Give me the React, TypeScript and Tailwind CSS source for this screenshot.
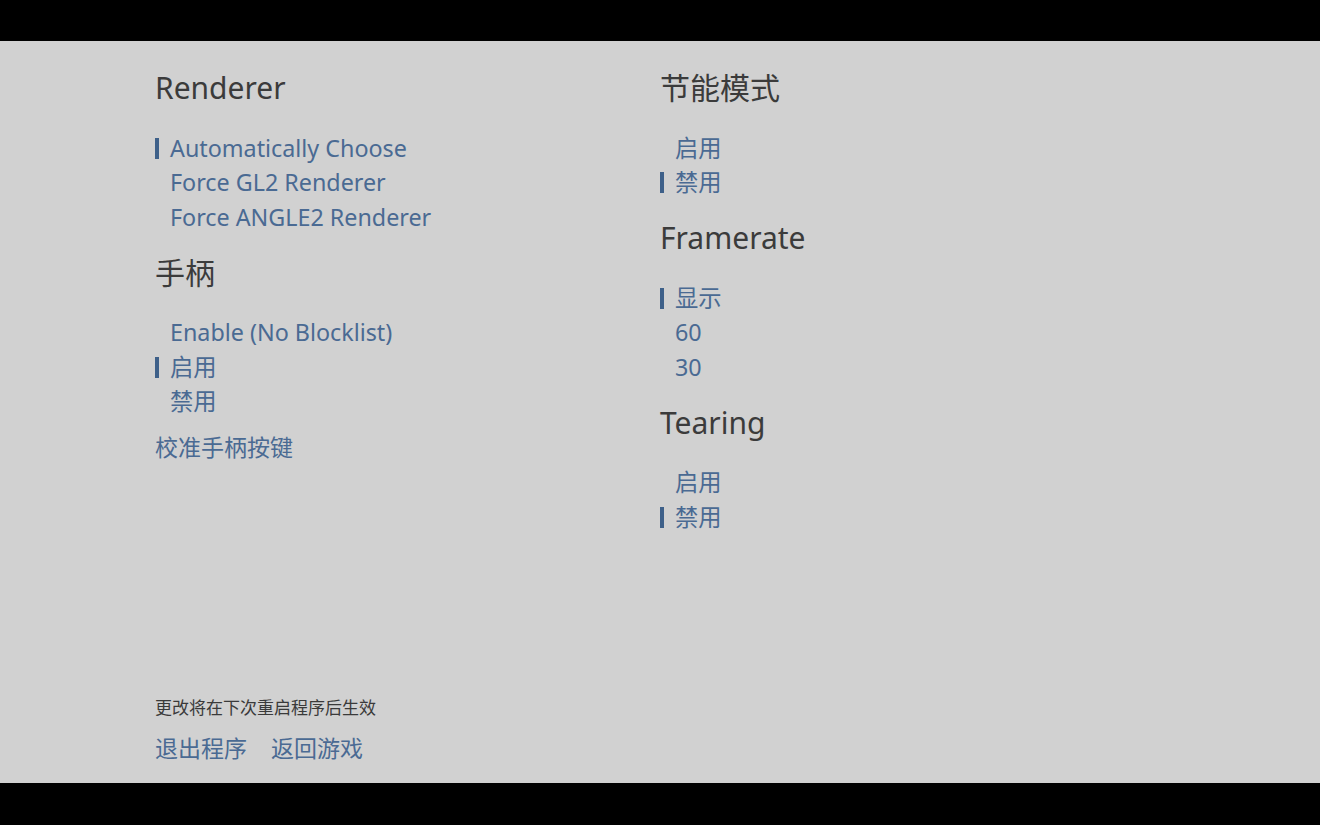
type Option = { label: string; selected?: boolean }

type Section = { title: string; options: Option[] }

const leftSections: Section[] = [
  {
    title: 'Renderer',
    options: [
      { label: 'Automatically Choose', selected: true },
      { label: 'Force GL2 Renderer' },
      { label: 'Force ANGLE2 Renderer' },
    ],
  },
  {
    title: '手柄',
    options: [
      { label: 'Enable (No Blocklist)' },
      { label: '启用', selected: true },
      { label: '禁用' },
    ],
  },
]

const rightSections: Section[] = [
  {
    title: '节能模式',
    options: [{ label: '启用' }, { label: '禁用', selected: true }],
  },
  {
    title: 'Framerate',
    options: [{ label: '显示', selected: true }, { label: '60' }, { label: '30' }],
  },
  {
    title: 'Tearing',
    options: [{ label: '启用' }, { label: '禁用', selected: true }],
  },
]

const font = {
  fontFamily: '"Noto Sans", "Noto Sans CJK SC", sans-serif',
}

function OptionRow({ label, selected }: Option) {
  return (
    <div className="flex h-[34.5px] items-center">
      <span
        className={
          selected ? 'h-[21px] w-[4px] bg-[#3e6089]' : 'h-[21px] w-[4px]'
        }
      />
      <span className="ml-[11px] text-[23.3px] leading-none text-[#4a6a93]">
        {label}
      </span>
    </div>
  )
}

function SettingSection({ title, options }: Section) {
  return (
    <div className="mb-[16px]">
      <h2 className="h-[44px] text-[30px] leading-[44px] text-[#3b3b3b]">
        {title}
      </h2>
      <div className="mt-[21px]">
        {options.map((option) => (
          <OptionRow key={option.label} {...option} />
        ))}
      </div>
    </div>
  )
}

export default function App() {
  return (
    <div className="flex h-[825px] w-[1320px] flex-col bg-black" style={font}>
      <div className="h-[41px] shrink-0 bg-black" />
      <main className="flex flex-1 flex-col bg-[#d1d1d1] px-[155px] pt-[25px] pb-[18px]">
        <div className="grid grid-cols-[505px_1fr]">
          <div>
            {leftSections.map((section) => (
              <SettingSection key={section.title} {...section} />
            ))}
            <div className="-mt-[5px] flex h-[34px] items-center text-[23px] leading-none text-[#4a6a93]">
              校准手柄按键
            </div>
          </div>
          <div>
            {rightSections.map((section) => (
              <SettingSection key={section.title} {...section} />
            ))}
          </div>
        </div>
        <div className="mt-auto">
          <p className="flex h-[24px] items-center text-[17px] text-[#3a3a3a]">
            更改将在下次重启程序后生效
          </p>
          <div className="mt-[11px] flex h-[34px] items-center gap-[24px] text-[23px] leading-none text-[#4a6a93]">
            <span>退出程序</span>
            <span>返回游戏</span>
          </div>
        </div>
      </main>
      <div className="h-[42px] shrink-0 bg-black" />
    </div>
  )
}
